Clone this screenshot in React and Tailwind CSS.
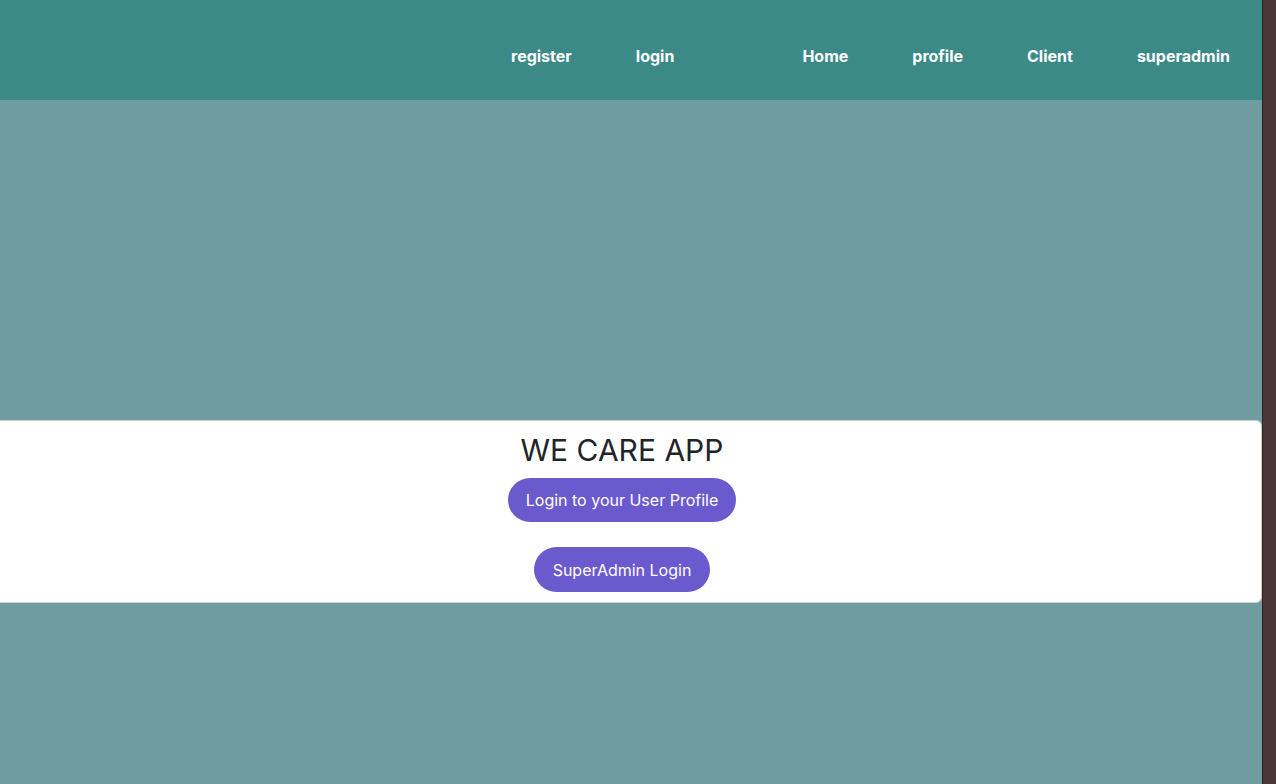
export default function App() {
  const leftLinks = ['register', 'login'];
  const rightLinks = ['Home', 'profile', 'Client', 'superadmin'];

  return (
    <div className="flex h-[784px] w-[1276px] overflow-hidden font-['Inter',sans-serif]">
      <div className="flex w-[1262px] flex-col bg-[#6f9c9e]">
        <nav className="flex h-[100px] shrink-0 items-center justify-end bg-[#3b8a88] pt-[12px]">
          <ul className="flex items-center">
            {leftLinks.map((l) => (
              <li key={l} className="px-8 text-base font-bold text-white">
                {l}
              </li>
            ))}
          </ul>
          <ul className="ml-16 flex items-center">
            {rightLinks.map((l) => (
              <li key={l} className="px-8 text-base font-bold text-white">
                {l}
              </li>
            ))}
          </ul>
        </nav>

        <div className="mt-[320px] -ml-[18px] flex h-[183px] w-[1280px] flex-col items-center rounded-md border border-[#d0d0d0] bg-white pt-[10px]">
          <h1 className="text-[30px] font-normal leading-[38px] text-[#212529]">WE CARE APP</h1>
          <button className="mt-[9px] h-[44px] rounded-full bg-[#6a5acd] px-[18px] text-base text-white">
            Login to your User Profile
          </button>
          <button className="mt-[25px] h-[45px] rounded-full bg-[#6a5acd] px-[19px] text-base text-white">
            SuperAdmin Login
          </button>
        </div>
      </div>
      <div className="w-[14px] border-l border-[#2e2220] bg-[#4b3735]" />
    </div>
  );
}
